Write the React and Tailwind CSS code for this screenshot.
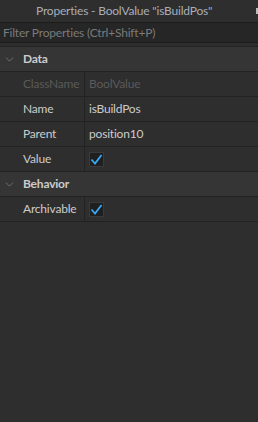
import { ChevronDown } from "lucide-react";

const font = { fontFamily: '"Lato", "Noto Sans", sans-serif' };

const Check = () => (
  <div className="w-[15px] h-[15px] bg-[#1f1f1f] border border-[#3a3a3a] flex items-center justify-center">
    <svg width="13" height="13" viewBox="0 0 13 13">
      <path d="M1.5 6.5 L5 10.5 L11.5 2" fill="none" stroke="#3aa8f5" strokeWidth="1.8" />
    </svg>
  </div>
);

const Row = ({ label, children, dim }) => (
  <div className="flex h-[25px] border-b border-[#222222]">
    <div
      className={`w-[85px] shrink-0 pl-[23px] flex items-center border-r border-[#222222] whitespace-nowrap ${
        dim ? "text-[#5a5a5a]" : "text-[#cccccc]"
      }`}
    >
      {label}
    </div>
    <div className={`flex-1 pl-[4px] flex items-center ${dim ? "text-[#5a5a5a]" : "text-[#cccccc]"}`}>
      {children}
    </div>
  </div>
);

const Header = ({ title }) => (
  <div className="flex items-center h-[25px] bg-[#353535] border-b border-[#222222]">
    <ChevronDown className="w-[13px] h-[13px] ml-[3px] text-[#7a7a7a]" strokeWidth={1.5} />
    <span className="ml-[7px] font-bold text-[#cccccc]">{title}</span>
  </div>
);

export default function App() {
  return (
    <div
      className="w-[258px] h-[422px] bg-[#2e2e2e] text-[12px] tracking-[-0.2px] overflow-hidden flex flex-col"
      style={font}
    >
      <div className="h-[22px] flex items-center justify-between">
        <span className="ml-[36px] text-[#a9adb8]">Properties - BoolValue "isBuildPos"</span>
        <div className="w-[2px] h-[6px] bg-[#bbbbbb]" />
      </div>
      <div className="h-[21px] bg-[#262626] border-y border-[#1c1c1c] flex items-center pl-[3px] text-[#7a7a7a]">
        Filter Properties (Ctrl+Shift+P)
      </div>
      <div className="h-[4px] border-b border-[#222222]" />
      <Header title="Data" />
      <Row label="ClassName" dim>BoolValue</Row>
      <Row label="Name">isBuildPos</Row>
      <Row label="Parent">position10</Row>
      <Row label="Value"><Check /></Row>
      <Header title="Behavior" />
      <Row label="Archivable"><Check /></Row>
    </div>
  );
}
